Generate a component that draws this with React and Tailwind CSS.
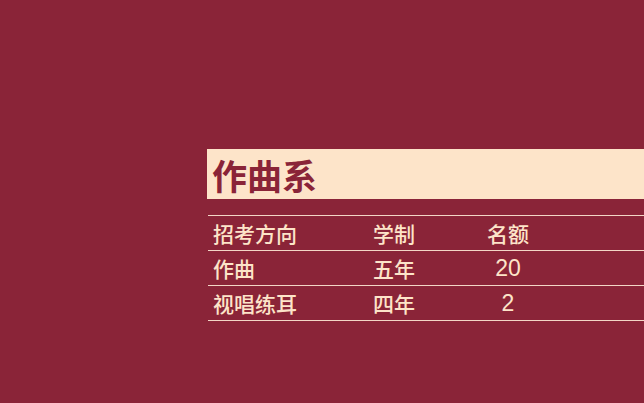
import React from 'react';

const rows = [
    ['招考方向', '学制', '名额'],
    ['作曲', '五年', '20'],
    ['视唱练耳', '四年', '2'],
];

const App = () => {
    return (
        <div
            className="w-full h-[403px] bg-[#8a2438] pt-[149px] pl-[207px] overflow-hidden"
            style={{ fontFamily: '"Noto Sans CJK SC", "Noto Sans", sans-serif' }}
        >
            <div className="h-[50px] bg-[#fde4c9] flex items-center pl-[5px]">
                <h1 className="text-[35px] leading-none font-bold text-[#8a2438]">作曲系</h1>
            </div>

            <div className="mt-[16px] ml-px border-b border-[#f3d6c6]">
                {rows.map((row, i) => (
                    <div key={i} className="grid grid-cols-[165px_100px_70px_1fr] h-[35px] border-t border-[#f3d6c6] items-center text-[21px] leading-none font-medium text-[#fde4c9]">
                        <div className="pl-[5px]">{row[0]}</div>
                        <div>{row[1]}</div>
                        <div className={i === 0 ? 'text-center' : 'text-center text-[23px] font-["Liberation_Sans",sans-serif]'}>{row[2]}</div>
                        <div></div>
                    </div>
                ))}
            </div>
        </div>
    );
};

export default App;
